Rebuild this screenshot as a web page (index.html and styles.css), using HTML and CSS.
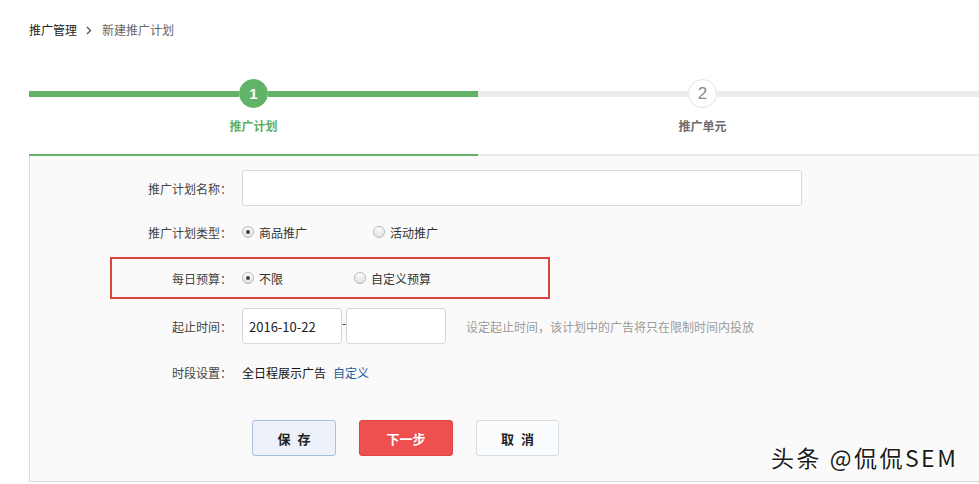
FILE: index.html
```html
<!DOCTYPE html>
<html lang="zh-CN">
<head>
<meta charset="utf-8">
<title>新建推广计划</title>
<link rel="stylesheet" href="styles.css">
</head>
<body>
<div class="page">
  <div class="breadcrumb">
    <span class="crumb-root">推广管理</span>
    <svg class="chev" width="6" height="9" viewBox="0 0 6 9"><path d="M1 1 L4.5 4.5 L1 8" fill="none" stroke="#555" stroke-width="1.4"/></svg>
    <span class="crumb-cur">新建推广计划</span>
  </div>

  <div class="steps">
    <div class="step active">
      <div class="track"><span class="seg"></span><span class="circle">1</span><span class="seg"></span></div>
      <div class="step-label">推广计划</div>
    </div>
    <div class="step">
      <div class="track"><span class="seg"></span><span class="circle">2</span><span class="seg"></span></div>
      <div class="step-label">推广单元</div>
    </div>
    <div class="step step-rest">
      <div class="track"><span class="seg"></span></div>
    </div>
  </div>

  <div class="panel">
    <div class="row row-name">
      <div class="label">推广计划名称：</div>
      <div class="input input-name"></div>
    </div>

    <div class="row row-type">
      <div class="label">推广计划类型：</div>
      <label class="opt opt-w131"><span class="radio checked"></span>商品推广</label>
      <label class="opt"><span class="radio"></span>活动推广</label>
    </div>

    <div class="highlight">
      <div class="row row-budget">
        <div class="label label-in">每日预算：</div>
        <label class="opt opt-w112"><span class="radio checked"></span>不限</label>
        <label class="opt"><span class="radio"></span>自定义预算</label>
      </div>
    </div>

    <div class="row row-date">
      <div class="label">起止时间：</div>
      <div class="input input-date">2016-10-22</div>
      <span class="dash">-</span>
      <div class="input input-date"></div>
      <span class="hint">设定起止时间，该计划中的广告将只在限制时间内投放</span>
    </div>

    <div class="row row-time">
      <div class="label">时段设置：</div>
      <span class="value">全日程展示广告</span>
      <a class="link">自定义</a>
    </div>

    <div class="actions">
      <button class="btn btn-save btn-spaced">保 存</button>
      <button class="btn btn-next">下一步</button>
      <button class="btn btn-cancel btn-spaced">取 消</button>
    </div>
  </div>
</div>
<div class="watermark">头条 @侃侃SEM</div>
</body>
</html>
```
FILE: styles.css
```css
html, body {
  margin: 0;
  padding: 0;
  background: #fff;
  overflow: hidden;
}
body {
  font-family: "Noto Sans CJK SC", "Microsoft YaHei", sans-serif;
  font-size: 12px;
  color: #333;
  width: 979px;
  height: 484px;
  position: relative;
}
.page {
  padding-left: 29px;
  width: 950px;
}
.breadcrumb {
  display: flex;
  align-items: center;
  height: 20px;
  padding-top: 20px;
  line-height: 20px;
}
.crumb-root { color: #222; }
.chev { margin: 0 10px 0 9px; }
.crumb-cur { color: #666; }

.steps {
  display: flex;
  margin-top: 39px;
}
.step {
  width: 449px;
  flex-shrink: 0;
  display: flex;
  flex-direction: column;
  align-items: stretch;
  border-bottom: 2px solid #e8e8e8;
  padding-bottom: 19px;
}
.step.step-rest {
  width: auto;
  flex: 1;
  padding-bottom: 46px;
}
.step.active { border-bottom-color: #62b367; }
.track {
  display: flex;
  align-items: center;
  height: 29px;
}
.seg {
  flex: 1;
  height: 6px;
  background: #ececec;
}
.step.active .seg { background: #62b367; }
.circle {
  width: 29px;
  height: 29px;
  box-sizing: border-box;
  border-radius: 50%;
  border: 1px solid #e3e3e3;
  background: #fff;
  color: #8a8a8a;
  font-family: "Liberation Sans", Arial, sans-serif;
  font-size: 17px;
  display: flex;
  align-items: center;
  justify-content: center;
}
.step.active .circle {
  background: #62b367;
  border-color: #62b367;
  color: #fff;
  font-weight: bold;
  font-size: 15px;
}
.step-label {
  margin-top: 9px;
  line-height: 18px;
  text-align: center;
  font-weight: bold;
  color: #6b6b6b;
}
.step.active .step-label { color: #5fae63; }

.panel {
  width: 950px;
  background: #fafafa;
  border-left: 1px solid #dcdcdc;
  border-bottom: 1px solid #d8d8d8;
  padding-top: 14px;
  padding-bottom: 25px;
  box-sizing: border-box;
  height: 326px;
}
.row {
  display: flex;
  align-items: center;
}
.label {
  width: 202px;
  padding-right: 10px;
  text-align: right;
  color: #444;
  flex-shrink: 0;
}
.row-name { height: 36px; }
.input {
  box-sizing: border-box;
  height: 36px;
  background: #fff;
  border: 1px solid #d9d9d9;
  border-radius: 3px;
}
.input-name { width: 560px; }
.row-type { height: 24px; margin-top: 14px; }
.opt {
  display: flex;
  align-items: center;
  color: #333;
}
.opt-w131 { width: 131px; }
.opt-w112 { width: 112px; }
.radio {
  width: 12px;
  height: 12px;
  box-sizing: border-box;
  border-radius: 50%;
  border: 1px solid #b8b8b8;
  background: linear-gradient(#ffffff, #e2e2e2);
  margin-right: 5px;
  display: flex;
  align-items: center;
  justify-content: center;
}
.radio.checked::after {
  content: "";
  width: 4px;
  height: 4px;
  border-radius: 50%;
  background: #444;
}
.highlight {
  margin-top: 13px;
  margin-left: 80px;
  width: 440px;
  height: 42px;
  box-sizing: border-box;
  border: 2px solid #d9463e;
}
.row-budget { height: 38px; }
.label-in { width: 120px; }
.row-date { height: 36px; margin-top: 9px; }
.input-date {
  width: 100px;
  padding-left: 6px;
  display: flex;
  align-items: center;
  font-size: 13px;
  color: #222;
}
.dash {
  width: 4px;
  text-align: left;
  color: #333;
  align-self: flex-start;
  line-height: 30px;
}
.hint {
  margin-left: 20px;
  color: #9a9a9a;
}
.row-time { height: 24px; margin-top: 16px; }
.value { color: #111; }
.link {
  margin-left: 7px;
  color: #1f5f9f;
  cursor: pointer;
}
.actions {
  display: flex;
  margin-top: 36px;
  padding-left: 222px;
  height: 36px;
}
.btn {
  height: 36px;
  box-sizing: border-box;
  border-radius: 3px;
  font-family: "Noto Sans CJK SC", sans-serif;
  font-size: 13px;
  font-weight: bold;
  padding: 0;
  margin: 0;
}
.btn-spaced {
  letter-spacing: 2px;
  padding-left: 2px;
}
.btn-save {
  width: 84px;
  background: #edf2fa;
  border: 1px solid #a9c1de;
  color: #222;
}
.btn-next {
  width: 94px;
  margin-left: 23px;
  background: #ee4f4f;
  border: 1px solid #dc4444;
  color: #fff;
}
.btn-cancel {
  width: 83px;
  margin-left: 23px;
  background: #fafbfc;
  border: 1px solid #d8dde4;
  color: #222;
}
.watermark {
  position: absolute;
  left: 771px;
  top: 441px;
  font-size: 23px;
  line-height: 32px;
  letter-spacing: 2.5px;
  color: #1c1c1c;
  font-family: "Noto Sans CJK SC", sans-serif;
  text-shadow: 1px 1px 0 #fff, -1px -1px 0 #fff, 1px -1px 0 #fff, -1px 1px 0 #fff;
  white-space: nowrap;
}
```
